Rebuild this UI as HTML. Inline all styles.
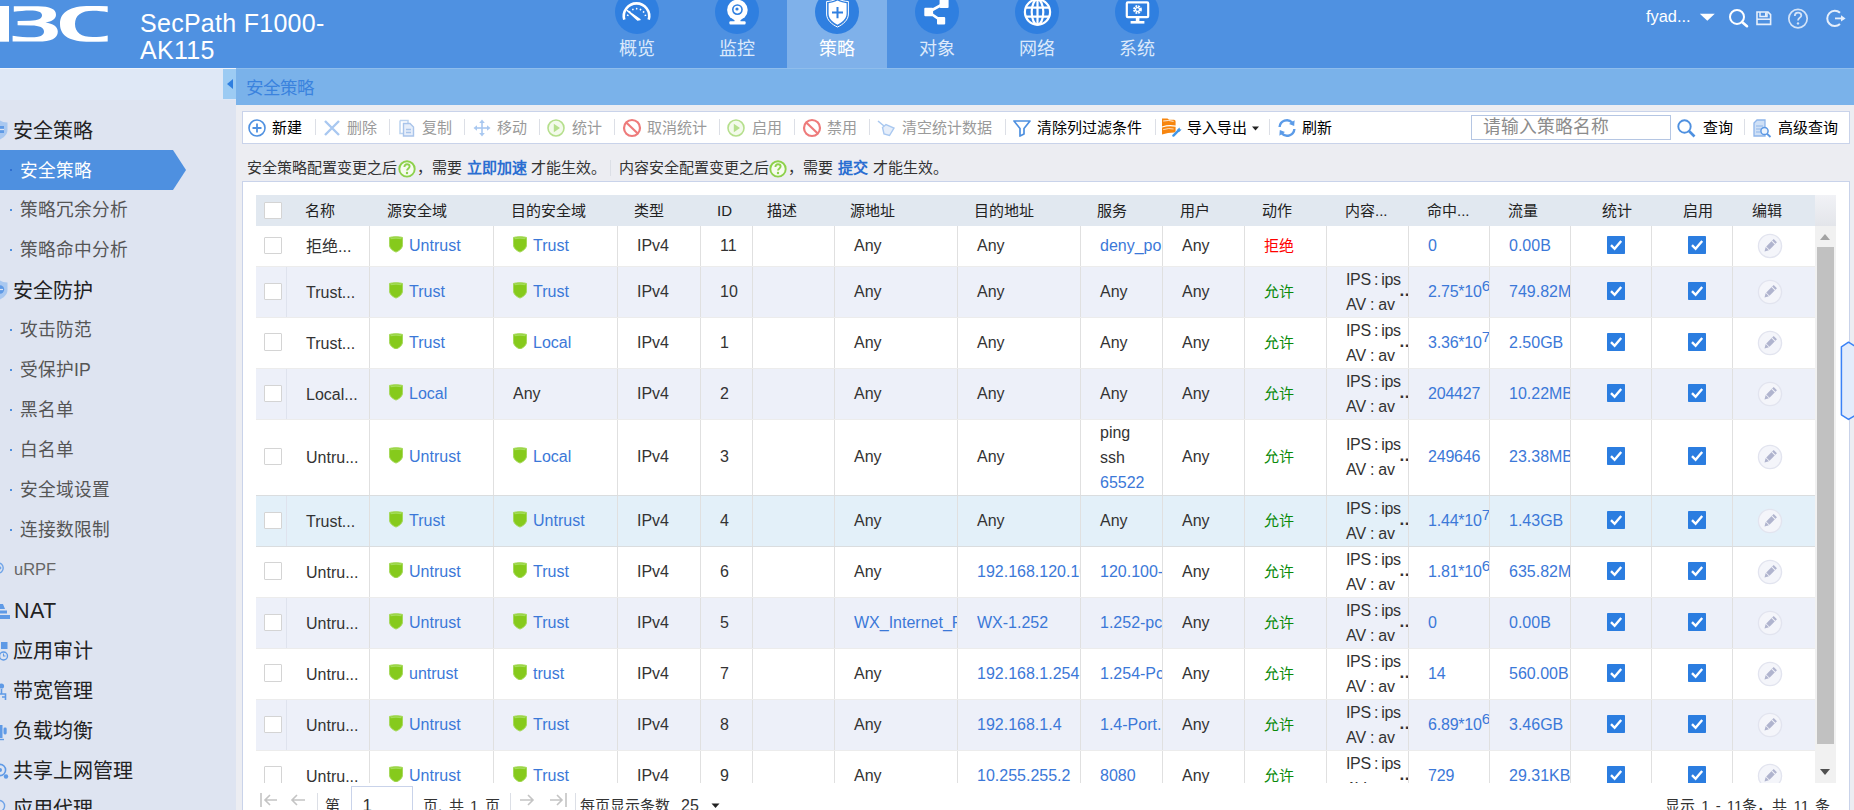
<!DOCTYPE html>
<html lang="zh-CN">
<head>
<meta charset="utf-8">
<title>安全策略</title>
<style>
*{box-sizing:border-box;margin:0;padding:0}
html,body{width:1854px;height:810px;overflow:hidden;background:#ecedf2}
body{position:relative;font-family:"Liberation Sans",sans-serif;font-size:16px;color:#333}
.abs{position:absolute}
/* header */
#hdr{position:absolute;left:0;top:0;width:1854px;height:68px;background:#4f91e1}
#logo{position:absolute;left:0;top:0}
#title{position:absolute;left:140px;top:9.8px;font-size:25px;line-height:27.2px;letter-spacing:.28px;color:#fff;width:240px}
.nav{position:absolute;top:0;width:100px;height:68px;text-align:center}
.nav.sel{background:#7fb1ea}
.nav .ic{position:absolute;left:28px;top:-10px;width:44px;height:44px;border-radius:22px;background:#2f7fe0}
.nav .ic svg{position:absolute;left:0;top:0;width:44px;height:44px}
.nav .lb{position:absolute;left:0;top:36.5px;width:100px;font-size:18px;line-height:24px;color:#dce9fb}
.nav.sel .lb{color:#fff}
#user{position:absolute;left:1646px;top:6px;font-size:16.4px;line-height:20px;color:#fff}
/* sub bar */
#sbtop{position:absolute;left:0;top:68px;width:236px;height:32px;background:#dfe8f6;border-top:1px solid #eef3fb}
#crumb{position:absolute;left:236px;top:68px;width:1618px;height:37px;background:#7ab2ea;border-top:1px solid #8fbdec}
#crumb span{position:absolute;left:10px;top:7.5px;font-size:17.5px;line-height:22px;color:#3a83de}
#collapse{position:absolute;left:223px;top:69px;width:13px;height:30px;background:#9ccbf3}
#collapse i{position:absolute;left:4px;top:10px;width:0;height:0;border-top:5px solid transparent;border-bottom:5px solid transparent;border-right:6px solid #2f7fe0}
/* sidebar */
#side{position:absolute;left:0;top:100px;width:236px;height:710px;background:#dee4f1}
.sg{position:absolute;left:13px;margin-top:.5px;font-size:20px;line-height:26px;color:#222;white-space:nowrap}
.si{position:absolute;left:20px;margin-top:1px;font-size:17.7px;line-height:24px;color:#555;white-space:nowrap}
.sd{position:absolute;left:10px;width:2px;height:2px;background:#4e90e0}
.sico{position:absolute;left:0}
#selitem{position:absolute;left:0;top:150px;width:186px;height:40px}
/* toolbar */
#tb{position:absolute;left:242px;top:111px;width:1608px;height:33px;background:#fff;border:1px solid #c9d3ea}
.tbi{position:absolute;top:118px;font-size:15px;line-height:20px;white-space:nowrap;color:#000}
.tbi.dis{color:#9a9a9a}
.tbs{position:absolute;top:119px;width:1px;height:16px;background:#dcdfe6}
.tbic{position:absolute;top:118px;width:20px;height:20px}
#q{position:absolute;left:1471px;top:115px;width:200px;height:25px;border:1px solid #b5c6e3;background:#fff}
#q span{position:absolute;left:10.5px;top:0px;font-size:17.8px;line-height:23px;color:#8c8c8c;white-space:nowrap}
/* info line */
.inf{position:absolute;top:158px;font-size:15px;line-height:20px;color:#333;white-space:nowrap}
.ib{font-weight:bold;color:#2a6ed1}
.hq{position:absolute;top:160px;width:17px;height:17px;border-radius:9px;border:1.6px solid #7cc43a;color:#7cc43a;font-size:12px;line-height:14px;text-align:center;font-weight:bold}
/* panel */
#panel{position:absolute;left:242px;top:181px;width:1608px;height:640px;background:#fff;border:1px solid #c9d3ea}
#th{position:absolute;left:256px;top:195px;width:1559px;height:31px;background:#e1e8f0}
#thx{position:absolute;left:1815px;top:195px;width:21px;height:31px;background:linear-gradient(#f1f2f6,#e3e5ea)}
.h{position:absolute;top:6px;font-size:15px;line-height:20px;color:#222;white-space:nowrap}
#tbody{position:absolute;left:256px;top:226px;width:1559px;height:557px;overflow:hidden}
.row{position:absolute;left:0;width:1559px}
.rw{background:#fff}
.rs{background:#edf0f9;border-top:1px solid #ececec;border-bottom:1px solid #ececec;z-index:1}
.rh{background:#e3f0f9;border-top:1px solid #dadddf;border-bottom:1px solid #dadddf;z-index:2}
.c{position:absolute;top:0;height:100%;border-left:1px solid #e0e0e0;padding-left:19px;overflow:hidden;white-space:nowrap;display:flex;align-items:center}
.c.c0{border-left:none;padding-left:8px}
.c.c1{border-left:1px solid #dfe3ee}
.c.c1 .t{top:1.3px}
.rw .c.c1{border-left-color:transparent}
.t{font-size:16px;line-height:20px;color:#333;position:relative;top:.3px}
.lk{color:#3b78d8}
.z{margin-left:6px}
.zi{width:14px;height:16.5px;flex:none;margin-top:-3px}
.ck{width:18px;height:18px;flex:none;margin-top:-2px}
.ed{width:26px;height:26px;flex:none}
.cc{padding-left:36px}
.ce{padding-left:24px}
.cb{display:block;width:17.5px;height:17.5px;border:1.5px solid #d4d4d4;background:#fff;border-radius:1px;margin-top:-1px}
.deny{color:#f00;font-size:15px}
.permit{color:#0a8a0a;font-size:15px}
.ml{display:block}
.ml .l{display:block;font-size:16px;line-height:25px;color:#333}
.ml .l.lk{color:#3b78d8}
.ml .l1{letter-spacing:-.35px;word-spacing:-.9px}
.ml .l2{word-spacing:-.65px}
.dd{font-weight:bold;position:absolute;right:-2px;top:50%;margin-top:-9px;font-size:17px;line-height:16px;color:#333;letter-spacing:.5px}
.hx{letter-spacing:-.2px}
sup{font-size:15.5px;vertical-align:6.2px;line-height:0}
/* scrollbar */
#sb{position:absolute;left:1815px;top:226px;width:21px;height:557px;background:#f1f1f1}
#sb .th{position:absolute;left:2px;top:21px;width:17px;height:497px;background:#c1c1c1}
.arr{position:absolute;left:5px;width:0;height:0;border-left:5.5px solid transparent;border-right:5.5px solid transparent}
/* pager */
#pg{position:absolute;left:243px;top:783px;width:1606px;height:27px;background:#fff}
.pt{position:absolute;font-size:15px;line-height:20px;color:#333;white-space:nowrap;top:12.8px}
</style>
</head>
<body>
<div id="hdr">
  <svg id="logo" width="112" height="46" viewBox="0 0 112 46"><g fill="#fff"><rect x="-2" y="6" width="11" height="35.7"/><path d="M13.8 6.2 L38 6.2 C50 6.2 56 9 56 14.8 C56 19 52 21.5 45.5 22.6 C53 23.8 57.8 26.5 57.8 31.8 C57.8 38.5 51 41.6 38 41.6 L12.6 41.6 L12.6 35.8 C20 36.8 26 37.3 31 37.3 C40 37.3 44 35.5 44 31.5 C44 27.5 40 25.4 31 25.4 L17.6 25.3 L17.6 21 L30 20.8 C38 20.6 42 18.8 42 15.3 C42 11.8 38 10.4 30 10.4 C25 10.4 19 11 13.8 11.8 Z"/><path d="M107.7 6.2 L107.7 12.3 C103 11.3 98 10.8 93 10.8 C81 10.8 75 15.5 75 24 C75 32.5 81 37 93 37 C98 37 103 36.5 107.7 35.5 L107.7 41.5 C102 41.7 96 41.8 90 41.8 C70 41.8 60 36 60 24 C60 12 70 6.1 90 6.1 C96 6.1 102 6.1 107.7 6.2 Z"/></g></svg>
  <div id="title">SecPath F1000-AK115</div>
  <div class="nav" style="left:587px"><div class="ic"><svg viewBox="0 0 44 44"><path d="M9.3 29.6 A12.7 12.7 0 1 1 33.7 29.6" fill="none" stroke="#fff" stroke-width="2.6"/><path d="M25 29.6 L22.6 30 L12.2 20.6 Z" fill="#fff" stroke="#fff" stroke-width="1.4" stroke-linejoin="round"/><path d="M12.6 26 A9.2 9.2 0 0 1 30.6 26" fill="none" stroke="#fff" stroke-width="1.7" stroke-dasharray="1.5 2.4"/></svg></div><div class="lb">概览</div></div>
  <div class="nav" style="left:687px"><div class="ic"><svg viewBox="0 0 44 44"><circle cx="22.4" cy="20" r="10.3" fill="#fff"/><circle cx="22.4" cy="19.6" r="5.4" fill="#2f7fe0"/><circle cx="22.4" cy="19.6" r="3.8" fill="#fff"/><circle cx="22" cy="19" r="1.6" fill="#2f7fe0"/><rect x="19.5" y="29" width="6" height="3" fill="#fff"/><rect x="14.4" y="31.2" width="16.2" height="3.4" rx="1" fill="#fff"/></svg></div><div class="lb">监控</div></div>
  <div class="nav sel" style="left:787px"><div class="ic"><svg viewBox="0 0 44 44"><path d="M11.6 11.5 C15 11.5 19 10.5 22.5 8.5 C26 10.5 30 11.5 33.4 11.5 L33.4 24 C33.4 30 28 34.5 22.5 37 C17 34.5 11.6 30 11.6 24 Z" fill="none" stroke="#fff" stroke-width="1"/><path d="M13.6 13.2 C16.5 13 19.5 12.2 22.5 10.6 C25.5 12.2 28.5 13 31.6 13.2 L31.6 23.8 C31.6 28.8 27 32.6 22.5 34.8 C18 32.6 13.6 28.8 13.6 23.8 Z" fill="#fff"/><path d="M17 22.6 H28 M22.5 17 V28.2" stroke="#2f7fe0" stroke-width="2"/></svg></div><div class="lb">策略</div></div>
  <div class="nav" style="left:887px"><div class="ic"><svg viewBox="0 0 44 44"><path d="M29 13.5 L13.6 22 L26 30.6" fill="none" stroke="#fff" stroke-width="2.6"/><rect x="9.3" y="17.8" width="8.8" height="8.4" rx="1" fill="#fff"/><rect x="24.6" y="9" width="9" height="9" rx="1" fill="#fff"/><rect x="22" y="27" width="8.2" height="7.4" rx="1" fill="#fff"/></svg></div><div class="lb">对象</div></div>
  <div class="nav" style="left:987px"><div class="ic"><svg viewBox="0 0 44 44"><g fill="none" stroke="#fff" stroke-width="2.2"><circle cx="22.5" cy="22.1" r="12.6"/><ellipse cx="22.5" cy="22.1" rx="5.8" ry="12.6"/><path d="M22.5 9.5 V34.7 M10.5 17.6 H34.5 M10.5 26.6 H34.5"/></g></svg></div><div class="lb">网络</div></div>
  <div class="nav" style="left:1087px"><div class="ic"><svg viewBox="0 0 44 44"><rect x="11.8" y="12.4" width="21.4" height="14.8" rx="1" fill="none" stroke="#fff" stroke-width="2.2"/><rect x="20.8" y="28" width="3.6" height="3.2" fill="#fff"/><rect x="15.6" y="31" width="13.8" height="2.6" fill="#fff"/><circle cx="22.5" cy="19.5" r="3.2" fill="none" stroke="#fff" stroke-width="2.4" stroke-dasharray="1.7 0.85"/><circle cx="22.5" cy="19.5" r="2.6" fill="#fff"/><circle cx="22.5" cy="19.5" r="1.3" fill="#2f7fe0"/></svg></div><div class="lb">系统</div></div>
  <div id="user">fyad...</div>
<svg class="abs" style="left:1696px;top:6px" width="158" height="26" viewBox="1696 6 158 26">
<path d="M1699.8 13.8 H1714.8 L1707.3 20.8 Z" fill="#fff"/>
<circle cx="1737" cy="16.9" r="7" fill="none" stroke="#fff" stroke-width="2"/><path d="M1742 22 L1747 26.2" stroke="#fff" stroke-width="2.6" stroke-linecap="round"/>
<path d="M1757 12 H1768 L1770.6 14.6 V24.4 H1757 Z" fill="none" stroke="#e6effb" stroke-width="1.6"/><path d="M1760 12 V16.5 H1767 V12" fill="none" stroke="#e6effb" stroke-width="1.5"/><rect x="1765" y="12.5" width="1.6" height="3.5" fill="#e6effb"/><path d="M1757 19.2 H1770.6" stroke="#e6effb" stroke-width="1.5"/>
<circle cx="1798" cy="18.6" r="9.2" fill="none" stroke="#d3e3f8" stroke-width="1.7"/><path d="M1794.8 16 C1794.8 13.5 1796.2 12.6 1798 12.6 C1800 12.6 1801.3 13.8 1801.3 15.4 C1801.3 17.6 1798 17.8 1798 20.6" fill="none" stroke="#d3e3f8" stroke-width="1.8"/><circle cx="1798" cy="23.4" r="1.2" fill="#d3e3f8"/>
<path d="M1840 12.8 A7.6 7.6 0 1 0 1840 24" fill="none" stroke="#e6effb" stroke-width="2"/><path d="M1835 18.4 H1842" stroke="#e6effb" stroke-width="1.8"/><path d="M1841 15.2 L1845.6 18.4 L1841 21.6 Z" fill="#e6effb"/>
</svg>
</div>
<div id="sbtop"></div>
<div id="crumb"><span>安全策略</span></div>
<div id="collapse"><i></i></div>
<div id="side"></div>
<svg id="selitem" viewBox="0 0 186 40"><path d="M0 0 L173 0 L186 20 L173 40 L0 40 Z" fill="#4e90e0"/></svg>
<div id="sidetxt"><div class="sd" style="top:169px;background:#2f6fd0"></div><div class="sd" style="top:209px"></div><div class="sd" style="top:249px"></div><div class="sd" style="top:329px"></div><div class="sd" style="top:369px"></div><div class="sd" style="top:409px"></div><div class="sd" style="top:449px"></div><div class="sd" style="top:489px"></div><div class="sd" style="top:529px"></div>
<svg class="sico" style="top:120px" width="9" height="20" viewBox="0 0 9 20"><path d="M-8 2.5 C-4 2.5 -2 1.5 0 0.5 C2 1.5 4 2.5 7.5 2.5 V10 C7.5 15 3 18 0 19.5 C-3 18 -8 15 -8 10 Z" fill="#a9c8f0"/><path d="M-2 6 H4 V13 H-2 Z" fill="#5f9ae6"/><path d="M-2 9.5 H4" stroke="#dee4f1" stroke-width="1.3"/></svg>
<svg class="sico" style="top:280px" width="9" height="20" viewBox="0 0 9 20"><path d="M-8 2.5 C-4 2.5 -2 1.5 0 0.5 C2 1.5 4 2.5 7.5 2.5 V10 C7.5 15 3 18 0 19.5 C-3 18 -8 15 -8 10 Z" fill="#a9c8f0"/><circle cx="0" cy="9.5" r="4.2" fill="#5f9ae6"/><path d="M-3 9.5 H3" stroke="#dee4f1" stroke-width="1.2"/></svg>
<svg class="sico" style="top:558px" width="6" height="20" viewBox="0 0 6 20"><circle cx="-2" cy="10" r="5.2" fill="none" stroke="#6fa4e8" stroke-width="1.4"/><circle cx="0" cy="10" r="1.4" fill="#6fa4e8"/></svg>
<svg class="sico" style="top:601px" width="11" height="20" viewBox="0 0 11 20"><path d="M0 3 H3 L5 8 H0 Z" fill="#5f9ae6"/><rect x="0" y="9.5" width="7" height="3" fill="#5f9ae6"/><rect x="0" y="14" width="10" height="4" fill="#5f9ae6"/></svg>
<svg class="sico" style="top:640px" width="9" height="22" viewBox="0 0 9 22"><rect x="1" y="2" width="6.5" height="7" fill="#5f9ae6"/><circle cx="3.5" cy="16" r="4" fill="none" stroke="#5f9ae6" stroke-width="1.4"/><path d="M3.5 13.5 V16 H5.5" fill="none" stroke="#5f9ae6" stroke-width="1.1"/></svg>
<svg class="sico" style="top:681px" width="8" height="22" viewBox="0 0 8 22"><circle cx="1.5" cy="5" r="2.6" fill="#5f9ae6"/><path d="M1.5 8 V13 M-2 13 H5.5 V19 M5.5 16 H2" fill="none" stroke="#5f9ae6" stroke-width="1.6"/></svg>
<svg class="sico" style="top:721px" width="8" height="22" viewBox="0 0 8 22"><path d="M0 4 H2.5 V17 H0 Z" fill="#5f9ae6"/><rect x="3.5" y="6.5" width="3.2" height="7" rx="1.4" fill="#5f9ae6"/><path d="M0 18.5 H4" stroke="#5f9ae6" stroke-width="1.4"/></svg>
<svg class="sico" style="top:760px" width="9" height="22" viewBox="0 0 9 22"><circle cx="0" cy="10" r="5.6" fill="none" stroke="#5f9ae6" stroke-width="1.6"/><circle cx="0" cy="10" r="2" fill="#5f9ae6"/><circle cx="6" cy="16.5" r="2.2" fill="#5f9ae6"/></svg>
<svg class="sico" style="top:797px" width="7" height="13" viewBox="0 0 7 13"><circle cx="-1" cy="9" r="5.6" fill="none" stroke="#6fa4e8" stroke-width="1.4"/></svg>

  <div class="sg" style="top:117px">安全策略</div>
  <div class="si" style="top:158px;color:#fff">安全策略</div>
  <div class="si" style="top:197px">策略冗余分析</div>
  <div class="si" style="top:237px">策略命中分析</div>
  <div class="sg" style="top:277px">安全防护</div>
  <div class="si" style="top:317px">攻击防范</div>
  <div class="si" style="top:357px">受保护IP</div>
  <div class="si" style="top:397px">黑名单</div>
  <div class="si" style="top:437px">白名单</div>
  <div class="si" style="top:477px">安全域设置</div>
  <div class="si" style="top:517px">连接数限制</div>
  <div class="si" style="top:556px;left:14px;font-size:16.5px;color:#666">uRPF</div>
  <div class="sg" style="top:597.5px;left:14px;font-size:21.5px;letter-spacing:.4px">NAT</div>
  <div class="sg" style="top:637.5px">应用审计</div>
  <div class="sg" style="top:677.5px">带宽管理</div>
  <div class="sg" style="top:717.5px">负载均衡</div>
  <div class="sg" style="top:757.5px">共享上网管理</div>
  <div class="sg" style="top:795px">应用代理</div>
</div>
<div id="tb"></div>
<div id="tbl"><div class="tbi" style="left:272px">新建</div><div class="tbs" style="left:315px"></div><div class="tbi dis" style="left:347px">删除</div><div class="tbs" style="left:389px"></div><div class="tbi dis" style="left:422px">复制</div><div class="tbs" style="left:464px"></div><div class="tbi dis" style="left:497px">移动</div><div class="tbs" style="left:539px"></div><div class="tbi dis" style="left:572px">统计</div><div class="tbs" style="left:614px"></div><div class="tbi dis" style="left:647px">取消统计</div><div class="tbs" style="left:719px"></div><div class="tbi dis" style="left:752px">启用</div><div class="tbs" style="left:794px"></div><div class="tbi dis" style="left:827px">禁用</div><div class="tbs" style="left:869px"></div><div class="tbi dis" style="left:902px">清空统计数据</div><div class="tbs" style="left:1005px"></div><div class="tbi" style="left:1037px">清除列过滤条件</div><div class="tbs" style="left:1155px"></div><div class="tbi" style="left:1187px">导入导出</div><div class="tbs" style="left:1269px"></div><div class="tbi" style="left:1302px">刷新</div><div class="tbi" style="left:1703px">查询</div><div class="tbs" style="left:1744px"></div><div class="tbi" style="left:1778px">高级查询</div>
<svg class="tbic" style="left:247px" viewBox="0 0 20 20"><circle cx="10" cy="10" r="8" fill="none" stroke="#4e90e0" stroke-width="1.6"/><path d="M5.5 10 H14.5 M10 5.5 V14.5" stroke="#4e90e0" stroke-width="1.8"/></svg>
<svg class="tbic" style="left:322px" viewBox="0 0 20 20"><path d="M3 3 L17 17 M17 3 L3 17" stroke="#a9c8f0" stroke-width="2.4"/></svg>
<svg class="tbic" style="left:397px" viewBox="0 0 20 20"><path d="M3 2.5 H11 L11 5 M3 2.5 V15.5 H6" fill="none" stroke="#bcd3f0" stroke-width="1.5"/><path d="M6.5 5.5 H13 L16.5 9 V18 H6.5 Z" fill="#e6eefa" stroke="#a9c4ea" stroke-width="1.4"/><path d="M9 11.5 H14 M9 14.5 H14" stroke="#a9c4ea" stroke-width="1.3"/></svg>
<svg class="tbic" style="left:472px" viewBox="0 0 20 20"><g fill="#a9c8f0"><path d="M10 1.5 L12.8 5 H7.2 Z"/><path d="M10 18.5 L12.8 15 H7.2 Z"/><path d="M1.5 10 L5 7.2 V12.8 Z"/><path d="M18.5 10 L15 7.2 V12.8 Z"/><rect x="9.2" y="4.5" width="1.6" height="11"/><rect x="4.5" y="9.2" width="11" height="1.6"/></g></svg>
<svg class="tbic" style="left:546px" viewBox="0 0 20 20"><circle cx="10" cy="10" r="8" fill="#f3faeb" stroke="#b5df8c" stroke-width="1.6"/><path d="M7.8 5.8 L14 10 L7.8 14.2 Z" fill="#b5df8c"/></svg>
<svg class="tbic" style="left:622px" viewBox="0 0 20 20"><circle cx="10" cy="10" r="8" fill="none" stroke="#ee7b7b" stroke-width="2.2"/><path d="M4.5 4.8 L15.5 15.2" stroke="#ee7b7b" stroke-width="2.2"/></svg>
<svg class="tbic" style="left:726px" viewBox="0 0 20 20"><circle cx="10" cy="10" r="8" fill="#f3faeb" stroke="#b5df8c" stroke-width="1.6"/><path d="M7.8 5.8 L14 10 L7.8 14.2 Z" fill="#b5df8c"/></svg>
<svg class="tbic" style="left:802px" viewBox="0 0 20 20"><circle cx="10" cy="10" r="8" fill="none" stroke="#ee7b7b" stroke-width="2.2"/><path d="M4.5 4.8 L15.5 15.2" stroke="#ee7b7b" stroke-width="2.2"/></svg>
<svg class="tbic" style="left:876px" viewBox="0 0 20 20"><path d="M2 3 L8 8" stroke="#a9c8f0" stroke-width="1.6"/><path d="M6.5 9.5 L10 6.5 L18 10 L13.5 17.5 L8 16 Z" fill="#e6eefa" stroke="#a9c8f0" stroke-width="1.4"/></svg>
<svg class="tbic" style="left:1012px" viewBox="0 0 20 20"><path d="M2 3 H18 L12 10.5 V16 L8 18 V10.5 Z" fill="none" stroke="#4e90e0" stroke-width="1.7" stroke-linejoin="round"/></svg>
<svg class="tbic" style="left:1161px;width:22px" viewBox="0 0 22 20"><path d="M1 0.6 H6.5 L8 1.8 H13 Q14.6 1.8 14.6 3.4 V7.6 Q8 6 1 8.4 Z" fill="#f7860f"/><path d="M2.2 3 Q8 1.8 12.6 3.4" stroke="#fff" stroke-width="1" fill="none" opacity=".85"/><path d="M1 9.6 Q8 7.2 14.6 8.8 V13 Q14.6 14.4 13 14.4 Q7 14.4 1 16.4 Z" fill="#f7860f"/><path d="M2.2 11.6 Q8 9.8 12.6 11" stroke="#fff" stroke-width="1" fill="none" opacity=".7"/><path d="M12.4 17.6 L17.6 12.4" stroke="#3f97ea" stroke-width="2.4" stroke-linecap="round"/><path d="M16.2 11.6 L18.6 9.6 L18.9 11.3 L20.6 11.6 L18.6 13.8 Z" fill="#3f97ea"/></svg>
<svg class="tbic" style="left:1251px;width:9px" viewBox="0 0 9 20"><path d="M1 8.5 H8 L4.5 12.5 Z" fill="#222"/></svg>
<svg class="tbic" style="left:1277px;top:117.5px" viewBox="0 0 20 20"><path d="M2.6 9 A7.3 7.3 0 0 1 15.2 4.6" fill="none" stroke="#5b9be8" stroke-width="2.4"/><path d="M17.4 11 A7.3 7.3 0 0 1 4.8 15.4" fill="none" stroke="#5b9be8" stroke-width="2.4"/><path d="M17.6 2.2 L17.2 8 L12 6 Z" fill="#5b9be8"/><path d="M2.4 17.8 L2.8 12 L8 14 Z" fill="#5b9be8"/></svg>
<svg class="tbic" style="left:1676px" viewBox="0 0 20 20"><circle cx="8.5" cy="8.5" r="6.2" fill="none" stroke="#4e90e0" stroke-width="1.9"/><path d="M13 13 L18.5 18.5" stroke="#4e90e0" stroke-width="2.6"/></svg>
<svg class="tbic" style="left:1752px" viewBox="0 0 20 20"><path d="M2 5 L5 2 H13 V18 H2 Z" fill="#cfe0f6" stroke="#8fb5ea" stroke-width="1.3"/><path d="M4 8 H11 M4 11 H11 M4 14 H8" stroke="#8fb5ea" stroke-width="1.2"/><circle cx="12.5" cy="13" r="3.6" fill="#eef4fc" stroke="#5c98e4" stroke-width="1.5"/><path d="M15 15.8 L18.5 19" stroke="#5c98e4" stroke-width="1.9"/></svg>
<div id="q"><span>请输入策略名称</span></div></div>
<div class="inf" style="left:247px">安全策略配置变更之后</div><svg class="abs" style="left:398px;top:160px" width="18" height="18" viewBox="0 0 18 18"><circle cx="9" cy="8.9" r="7.7" fill="#f6fbef" stroke="#8dd14b" stroke-width="1.9"/><path d="M6.4 7 C6.4 5 7.6 4.2 9 4.2 C10.6 4.2 11.6 5.2 11.6 6.5 C11.6 8.4 9 8.4 9 10.6" fill="none" stroke="#8dd14b" stroke-width="1.9"/><circle cx="9" cy="13" r="1.2" fill="#8dd14b"/></svg><div class="inf" style="left:417px">，需要</div><div class="inf ib" style="left:467px">立即加速</div><div class="inf" style="left:531px">才能生效。</div><div class="tbs" style="left:610px;top:160px"></div>
<div class="inf" style="left:619px">内容安全配置变更之后</div><svg class="abs" style="left:769px;top:160px" width="18" height="18" viewBox="0 0 18 18"><circle cx="9" cy="8.9" r="7.7" fill="#f6fbef" stroke="#8dd14b" stroke-width="1.9"/><path d="M6.4 7 C6.4 5 7.6 4.2 9 4.2 C10.6 4.2 11.6 5.2 11.6 6.5 C11.6 8.4 9 8.4 9 10.6" fill="none" stroke="#8dd14b" stroke-width="1.9"/><circle cx="9" cy="13" r="1.2" fill="#8dd14b"/></svg><div class="inf" style="left:788px">，需要</div><div class="inf ib" style="left:838px">提交</div><div class="inf" style="left:873px">才能生效。</div>
<div id="panel"></div>
<div id="th"><span class="cb" style="position:absolute;left:8px;top:7.5px"></span><div class="h" style="left:49px">名称</div><div class="h" style="left:131px">源安全域</div><div class="h" style="left:255px">目的安全域</div><div class="h" style="left:378px">类型</div><div class="h" style="left:461px">ID</div><div class="h" style="left:511px">描述</div><div class="h" style="left:594px">源地址</div><div class="h" style="left:718px">目的地址</div><div class="h" style="left:841px">服务</div><div class="h" style="left:924px">用户</div><div class="h" style="left:1006px">动作</div><div class="h" style="left:1089px">内容...</div><div class="h" style="left:1171px">命中...</div><div class="h" style="left:1252px">流量</div><div class="h" style="left:1346px">统计</div><div class="h" style="left:1427px">启用</div><div class="h" style="left:1496px">编辑</div></div>
<div id="thx"></div>
<div id="tbody">
<div class="row rw" style="top:0px;height:40px">
<div class="c c0" style="left:0px;width:30px"><span class="cb"></span></div>
<div class="c c1" style="left:30px;width:83px"><span class="t">拒绝...</span></div>
<div class="c " style="left:113px;width:124px"><svg class="zi" viewBox="0 0 14 16"><path d="M0.5 1.2 C4 0.2 10 0.2 13.5 1.2 L13.5 8.5 C13.5 12 10.5 14.5 7 15.8 C3.5 14.5 0.5 12 0.5 8.5 Z" fill="#86ca1c" stroke="#a5d95a" stroke-width="1"/><path d="M1.5 1.6 C4.5 0.9 9.5 0.9 12.5 1.6 L12.5 3 C9.5 2.3 4.5 2.3 1.5 3 Z" fill="#a4dc5a"/></svg><span class="t lk z">Untrust</span></div>
<div class="c " style="left:237px;width:124px"><svg class="zi" viewBox="0 0 14 16"><path d="M0.5 1.2 C4 0.2 10 0.2 13.5 1.2 L13.5 8.5 C13.5 12 10.5 14.5 7 15.8 C3.5 14.5 0.5 12 0.5 8.5 Z" fill="#86ca1c" stroke="#a5d95a" stroke-width="1"/><path d="M1.5 1.6 C4.5 0.9 9.5 0.9 12.5 1.6 L12.5 3 C9.5 2.3 4.5 2.3 1.5 3 Z" fill="#a4dc5a"/></svg><span class="t lk z">Trust</span></div>
<div class="c " style="left:361px;width:83px"><span class="t">IPv4</span></div>
<div class="c " style="left:444px;width:52px"><span class="t">11</span></div>
<div class="c " style="left:496px;width:82px"></div>
<div class="c " style="left:578px;width:123px"><span class="t">Any</span></div>
<div class="c " style="left:701px;width:123px"><span class="t">Any</span></div>
<div class="c " style="left:824px;width:82px"><span class="t lk">deny_po</span></div>
<div class="c " style="left:906px;width:82px"><span class="t">Any</span></div>
<div class="c " style="left:988px;width:82px"><span class="t deny">拒绝</span></div>
<div class="c " style="left:1070px;width:82px"></div>
<div class="c " style="left:1152px;width:81px"><span class="t lk hx">0</span></div>
<div class="c " style="left:1233px;width:81px"><span class="t lk">0.00B</span></div>
<div class="c cc" style="left:1314px;width:81px"><svg class="ck" viewBox="0 0 18 18"><rect x="0" y="0" width="18" height="18" rx="0.8" fill="#2b7de0"/><path d="M4 9.2 L7.6 12.8 L14.2 5" fill="none" stroke="#fff" stroke-width="2.4"/></svg></div>
<div class="c cc" style="left:1395px;width:81px"><svg class="ck" viewBox="0 0 18 18"><rect x="0" y="0" width="18" height="18" rx="0.8" fill="#2b7de0"/><path d="M4 9.2 L7.6 12.8 L14.2 5" fill="none" stroke="#fff" stroke-width="2.4"/></svg></div>
<div class="c ce" style="left:1476px;width:82px"><svg class="ed" viewBox="0 0 26 26"><circle cx="13" cy="13" r="11.6" fill="#f4f5fa" stroke="#e2e4ef" stroke-width="1.3"/><g transform="rotate(45 13 13)"><rect x="10.7" y="5.5" width="4.6" height="10.5" fill="#b0b4ce"/><path d="M10.7 16.8 L15.3 16.8 L13 20.8 Z" fill="#b0b4ce"/><rect x="10.7" y="7.6" width="4.6" height="1" fill="#f1f2f8"/></g></svg></div>
</div>
<div class="row rs" style="top:40px;height:52px">
<div class="c c0" style="left:0px;width:30px"><span class="cb"></span></div>
<div class="c c1" style="left:30px;width:83px"><span class="t">Trust...</span></div>
<div class="c " style="left:113px;width:124px"><svg class="zi" viewBox="0 0 14 16"><path d="M0.5 1.2 C4 0.2 10 0.2 13.5 1.2 L13.5 8.5 C13.5 12 10.5 14.5 7 15.8 C3.5 14.5 0.5 12 0.5 8.5 Z" fill="#86ca1c" stroke="#a5d95a" stroke-width="1"/><path d="M1.5 1.6 C4.5 0.9 9.5 0.9 12.5 1.6 L12.5 3 C9.5 2.3 4.5 2.3 1.5 3 Z" fill="#a4dc5a"/></svg><span class="t lk z">Trust</span></div>
<div class="c " style="left:237px;width:124px"><svg class="zi" viewBox="0 0 14 16"><path d="M0.5 1.2 C4 0.2 10 0.2 13.5 1.2 L13.5 8.5 C13.5 12 10.5 14.5 7 15.8 C3.5 14.5 0.5 12 0.5 8.5 Z" fill="#86ca1c" stroke="#a5d95a" stroke-width="1"/><path d="M1.5 1.6 C4.5 0.9 9.5 0.9 12.5 1.6 L12.5 3 C9.5 2.3 4.5 2.3 1.5 3 Z" fill="#a4dc5a"/></svg><span class="t lk z">Trust</span></div>
<div class="c " style="left:361px;width:83px"><span class="t">IPv4</span></div>
<div class="c " style="left:444px;width:52px"><span class="t">10</span></div>
<div class="c " style="left:496px;width:82px"></div>
<div class="c " style="left:578px;width:123px"><span class="t">Any</span></div>
<div class="c " style="left:701px;width:123px"><span class="t">Any</span></div>
<div class="c " style="left:824px;width:82px"><span class="t">Any</span></div>
<div class="c " style="left:906px;width:82px"><span class="t">Any</span></div>
<div class="c " style="left:988px;width:82px"><span class="t permit">允许</span></div>
<div class="c " style="left:1070px;width:82px"><span class="ml"><span class="l l1">IPS : ips</span><span class="l l2">AV : av</span></span><span class="dd">..</span></div>
<div class="c " style="left:1152px;width:81px"><span class="t lk hx">2.75*10<sup>6</sup></span></div>
<div class="c " style="left:1233px;width:81px"><span class="t lk">749.82M</span></div>
<div class="c cc" style="left:1314px;width:81px"><svg class="ck" viewBox="0 0 18 18"><rect x="0" y="0" width="18" height="18" rx="0.8" fill="#2b7de0"/><path d="M4 9.2 L7.6 12.8 L14.2 5" fill="none" stroke="#fff" stroke-width="2.4"/></svg></div>
<div class="c cc" style="left:1395px;width:81px"><svg class="ck" viewBox="0 0 18 18"><rect x="0" y="0" width="18" height="18" rx="0.8" fill="#2b7de0"/><path d="M4 9.2 L7.6 12.8 L14.2 5" fill="none" stroke="#fff" stroke-width="2.4"/></svg></div>
<div class="c ce" style="left:1476px;width:82px"><svg class="ed" viewBox="0 0 26 26"><circle cx="13" cy="13" r="11.6" fill="#f4f5fa" stroke="#e2e4ef" stroke-width="1.3"/><g transform="rotate(45 13 13)"><rect x="10.7" y="5.5" width="4.6" height="10.5" fill="#b0b4ce"/><path d="M10.7 16.8 L15.3 16.8 L13 20.8 Z" fill="#b0b4ce"/><rect x="10.7" y="7.6" width="4.6" height="1" fill="#f1f2f8"/></g></svg></div>
</div>
<div class="row rw" style="top:91px;height:51px">
<div class="c c0" style="left:0px;width:30px"><span class="cb"></span></div>
<div class="c c1" style="left:30px;width:83px"><span class="t">Trust...</span></div>
<div class="c " style="left:113px;width:124px"><svg class="zi" viewBox="0 0 14 16"><path d="M0.5 1.2 C4 0.2 10 0.2 13.5 1.2 L13.5 8.5 C13.5 12 10.5 14.5 7 15.8 C3.5 14.5 0.5 12 0.5 8.5 Z" fill="#86ca1c" stroke="#a5d95a" stroke-width="1"/><path d="M1.5 1.6 C4.5 0.9 9.5 0.9 12.5 1.6 L12.5 3 C9.5 2.3 4.5 2.3 1.5 3 Z" fill="#a4dc5a"/></svg><span class="t lk z">Trust</span></div>
<div class="c " style="left:237px;width:124px"><svg class="zi" viewBox="0 0 14 16"><path d="M0.5 1.2 C4 0.2 10 0.2 13.5 1.2 L13.5 8.5 C13.5 12 10.5 14.5 7 15.8 C3.5 14.5 0.5 12 0.5 8.5 Z" fill="#86ca1c" stroke="#a5d95a" stroke-width="1"/><path d="M1.5 1.6 C4.5 0.9 9.5 0.9 12.5 1.6 L12.5 3 C9.5 2.3 4.5 2.3 1.5 3 Z" fill="#a4dc5a"/></svg><span class="t lk z">Local</span></div>
<div class="c " style="left:361px;width:83px"><span class="t">IPv4</span></div>
<div class="c " style="left:444px;width:52px"><span class="t">1</span></div>
<div class="c " style="left:496px;width:82px"></div>
<div class="c " style="left:578px;width:123px"><span class="t">Any</span></div>
<div class="c " style="left:701px;width:123px"><span class="t">Any</span></div>
<div class="c " style="left:824px;width:82px"><span class="t">Any</span></div>
<div class="c " style="left:906px;width:82px"><span class="t">Any</span></div>
<div class="c " style="left:988px;width:82px"><span class="t permit">允许</span></div>
<div class="c " style="left:1070px;width:82px"><span class="ml"><span class="l l1">IPS : ips</span><span class="l l2">AV : av</span></span><span class="dd">..</span></div>
<div class="c " style="left:1152px;width:81px"><span class="t lk hx">3.36*10<sup>7</sup></span></div>
<div class="c " style="left:1233px;width:81px"><span class="t lk">2.50GB</span></div>
<div class="c cc" style="left:1314px;width:81px"><svg class="ck" viewBox="0 0 18 18"><rect x="0" y="0" width="18" height="18" rx="0.8" fill="#2b7de0"/><path d="M4 9.2 L7.6 12.8 L14.2 5" fill="none" stroke="#fff" stroke-width="2.4"/></svg></div>
<div class="c cc" style="left:1395px;width:81px"><svg class="ck" viewBox="0 0 18 18"><rect x="0" y="0" width="18" height="18" rx="0.8" fill="#2b7de0"/><path d="M4 9.2 L7.6 12.8 L14.2 5" fill="none" stroke="#fff" stroke-width="2.4"/></svg></div>
<div class="c ce" style="left:1476px;width:82px"><svg class="ed" viewBox="0 0 26 26"><circle cx="13" cy="13" r="11.6" fill="#f4f5fa" stroke="#e2e4ef" stroke-width="1.3"/><g transform="rotate(45 13 13)"><rect x="10.7" y="5.5" width="4.6" height="10.5" fill="#b0b4ce"/><path d="M10.7 16.8 L15.3 16.8 L13 20.8 Z" fill="#b0b4ce"/><rect x="10.7" y="7.6" width="4.6" height="1" fill="#f1f2f8"/></g></svg></div>
</div>
<div class="row rs" style="top:142px;height:52px">
<div class="c c0" style="left:0px;width:30px"><span class="cb"></span></div>
<div class="c c1" style="left:30px;width:83px"><span class="t">Local...</span></div>
<div class="c " style="left:113px;width:124px"><svg class="zi" viewBox="0 0 14 16"><path d="M0.5 1.2 C4 0.2 10 0.2 13.5 1.2 L13.5 8.5 C13.5 12 10.5 14.5 7 15.8 C3.5 14.5 0.5 12 0.5 8.5 Z" fill="#86ca1c" stroke="#a5d95a" stroke-width="1"/><path d="M1.5 1.6 C4.5 0.9 9.5 0.9 12.5 1.6 L12.5 3 C9.5 2.3 4.5 2.3 1.5 3 Z" fill="#a4dc5a"/></svg><span class="t lk z">Local</span></div>
<div class="c " style="left:237px;width:124px"><span class="t">Any</span></div>
<div class="c " style="left:361px;width:83px"><span class="t">IPv4</span></div>
<div class="c " style="left:444px;width:52px"><span class="t">2</span></div>
<div class="c " style="left:496px;width:82px"></div>
<div class="c " style="left:578px;width:123px"><span class="t">Any</span></div>
<div class="c " style="left:701px;width:123px"><span class="t">Any</span></div>
<div class="c " style="left:824px;width:82px"><span class="t">Any</span></div>
<div class="c " style="left:906px;width:82px"><span class="t">Any</span></div>
<div class="c " style="left:988px;width:82px"><span class="t permit">允许</span></div>
<div class="c " style="left:1070px;width:82px"><span class="ml"><span class="l l1">IPS : ips</span><span class="l l2">AV : av</span></span><span class="dd">..</span></div>
<div class="c " style="left:1152px;width:81px"><span class="t lk hx">204427</span></div>
<div class="c " style="left:1233px;width:81px"><span class="t lk">10.22MB</span></div>
<div class="c cc" style="left:1314px;width:81px"><svg class="ck" viewBox="0 0 18 18"><rect x="0" y="0" width="18" height="18" rx="0.8" fill="#2b7de0"/><path d="M4 9.2 L7.6 12.8 L14.2 5" fill="none" stroke="#fff" stroke-width="2.4"/></svg></div>
<div class="c cc" style="left:1395px;width:81px"><svg class="ck" viewBox="0 0 18 18"><rect x="0" y="0" width="18" height="18" rx="0.8" fill="#2b7de0"/><path d="M4 9.2 L7.6 12.8 L14.2 5" fill="none" stroke="#fff" stroke-width="2.4"/></svg></div>
<div class="c ce" style="left:1476px;width:82px"><svg class="ed" viewBox="0 0 26 26"><circle cx="13" cy="13" r="11.6" fill="#f4f5fa" stroke="#e2e4ef" stroke-width="1.3"/><g transform="rotate(45 13 13)"><rect x="10.7" y="5.5" width="4.6" height="10.5" fill="#b0b4ce"/><path d="M10.7 16.8 L15.3 16.8 L13 20.8 Z" fill="#b0b4ce"/><rect x="10.7" y="7.6" width="4.6" height="1" fill="#f1f2f8"/></g></svg></div>
</div>
<div class="row rw" style="top:193px;height:76px">
<div class="c c0" style="left:0px;width:30px"><span class="cb"></span></div>
<div class="c c1" style="left:30px;width:83px"><span class="t">Untru...</span></div>
<div class="c " style="left:113px;width:124px"><svg class="zi" viewBox="0 0 14 16"><path d="M0.5 1.2 C4 0.2 10 0.2 13.5 1.2 L13.5 8.5 C13.5 12 10.5 14.5 7 15.8 C3.5 14.5 0.5 12 0.5 8.5 Z" fill="#86ca1c" stroke="#a5d95a" stroke-width="1"/><path d="M1.5 1.6 C4.5 0.9 9.5 0.9 12.5 1.6 L12.5 3 C9.5 2.3 4.5 2.3 1.5 3 Z" fill="#a4dc5a"/></svg><span class="t lk z">Untrust</span></div>
<div class="c " style="left:237px;width:124px"><svg class="zi" viewBox="0 0 14 16"><path d="M0.5 1.2 C4 0.2 10 0.2 13.5 1.2 L13.5 8.5 C13.5 12 10.5 14.5 7 15.8 C3.5 14.5 0.5 12 0.5 8.5 Z" fill="#86ca1c" stroke="#a5d95a" stroke-width="1"/><path d="M1.5 1.6 C4.5 0.9 9.5 0.9 12.5 1.6 L12.5 3 C9.5 2.3 4.5 2.3 1.5 3 Z" fill="#a4dc5a"/></svg><span class="t lk z">Local</span></div>
<div class="c " style="left:361px;width:83px"><span class="t">IPv4</span></div>
<div class="c " style="left:444px;width:52px"><span class="t">3</span></div>
<div class="c " style="left:496px;width:82px"></div>
<div class="c " style="left:578px;width:123px"><span class="t">Any</span></div>
<div class="c " style="left:701px;width:123px"><span class="t">Any</span></div>
<div class="c " style="left:824px;width:82px"><span class="ml"><span class="l">ping</span><span class="l">ssh</span><span class="l lk">65522</span></span></div>
<div class="c " style="left:906px;width:82px"><span class="t">Any</span></div>
<div class="c " style="left:988px;width:82px"><span class="t permit">允许</span></div>
<div class="c " style="left:1070px;width:82px"><span class="ml"><span class="l l1">IPS : ips</span><span class="l l2">AV : av</span></span><span class="dd">..</span></div>
<div class="c " style="left:1152px;width:81px"><span class="t lk hx">249646</span></div>
<div class="c " style="left:1233px;width:81px"><span class="t lk">23.38MB</span></div>
<div class="c cc" style="left:1314px;width:81px"><svg class="ck" viewBox="0 0 18 18"><rect x="0" y="0" width="18" height="18" rx="0.8" fill="#2b7de0"/><path d="M4 9.2 L7.6 12.8 L14.2 5" fill="none" stroke="#fff" stroke-width="2.4"/></svg></div>
<div class="c cc" style="left:1395px;width:81px"><svg class="ck" viewBox="0 0 18 18"><rect x="0" y="0" width="18" height="18" rx="0.8" fill="#2b7de0"/><path d="M4 9.2 L7.6 12.8 L14.2 5" fill="none" stroke="#fff" stroke-width="2.4"/></svg></div>
<div class="c ce" style="left:1476px;width:82px"><svg class="ed" viewBox="0 0 26 26"><circle cx="13" cy="13" r="11.6" fill="#f4f5fa" stroke="#e2e4ef" stroke-width="1.3"/><g transform="rotate(45 13 13)"><rect x="10.7" y="5.5" width="4.6" height="10.5" fill="#b0b4ce"/><path d="M10.7 16.8 L15.3 16.8 L13 20.8 Z" fill="#b0b4ce"/><rect x="10.7" y="7.6" width="4.6" height="1" fill="#f1f2f8"/></g></svg></div>
</div>
<div class="row rh" style="top:269px;height:52px">
<div class="c c0" style="left:0px;width:30px"><span class="cb"></span></div>
<div class="c c1" style="left:30px;width:83px"><span class="t">Trust...</span></div>
<div class="c " style="left:113px;width:124px"><svg class="zi" viewBox="0 0 14 16"><path d="M0.5 1.2 C4 0.2 10 0.2 13.5 1.2 L13.5 8.5 C13.5 12 10.5 14.5 7 15.8 C3.5 14.5 0.5 12 0.5 8.5 Z" fill="#86ca1c" stroke="#a5d95a" stroke-width="1"/><path d="M1.5 1.6 C4.5 0.9 9.5 0.9 12.5 1.6 L12.5 3 C9.5 2.3 4.5 2.3 1.5 3 Z" fill="#a4dc5a"/></svg><span class="t lk z">Trust</span></div>
<div class="c " style="left:237px;width:124px"><svg class="zi" viewBox="0 0 14 16"><path d="M0.5 1.2 C4 0.2 10 0.2 13.5 1.2 L13.5 8.5 C13.5 12 10.5 14.5 7 15.8 C3.5 14.5 0.5 12 0.5 8.5 Z" fill="#86ca1c" stroke="#a5d95a" stroke-width="1"/><path d="M1.5 1.6 C4.5 0.9 9.5 0.9 12.5 1.6 L12.5 3 C9.5 2.3 4.5 2.3 1.5 3 Z" fill="#a4dc5a"/></svg><span class="t lk z">Untrust</span></div>
<div class="c " style="left:361px;width:83px"><span class="t">IPv4</span></div>
<div class="c " style="left:444px;width:52px"><span class="t">4</span></div>
<div class="c " style="left:496px;width:82px"></div>
<div class="c " style="left:578px;width:123px"><span class="t">Any</span></div>
<div class="c " style="left:701px;width:123px"><span class="t">Any</span></div>
<div class="c " style="left:824px;width:82px"><span class="t">Any</span></div>
<div class="c " style="left:906px;width:82px"><span class="t">Any</span></div>
<div class="c " style="left:988px;width:82px"><span class="t permit">允许</span></div>
<div class="c " style="left:1070px;width:82px"><span class="ml"><span class="l l1">IPS : ips</span><span class="l l2">AV : av</span></span><span class="dd">..</span></div>
<div class="c " style="left:1152px;width:81px"><span class="t lk hx">1.44*10<sup>7</sup></span></div>
<div class="c " style="left:1233px;width:81px"><span class="t lk">1.43GB</span></div>
<div class="c cc" style="left:1314px;width:81px"><svg class="ck" viewBox="0 0 18 18"><rect x="0" y="0" width="18" height="18" rx="0.8" fill="#2b7de0"/><path d="M4 9.2 L7.6 12.8 L14.2 5" fill="none" stroke="#fff" stroke-width="2.4"/></svg></div>
<div class="c cc" style="left:1395px;width:81px"><svg class="ck" viewBox="0 0 18 18"><rect x="0" y="0" width="18" height="18" rx="0.8" fill="#2b7de0"/><path d="M4 9.2 L7.6 12.8 L14.2 5" fill="none" stroke="#fff" stroke-width="2.4"/></svg></div>
<div class="c ce" style="left:1476px;width:82px"><svg class="ed" viewBox="0 0 26 26"><circle cx="13" cy="13" r="11.6" fill="#f4f5fa" stroke="#e2e4ef" stroke-width="1.3"/><g transform="rotate(45 13 13)"><rect x="10.7" y="5.5" width="4.6" height="10.5" fill="#b0b4ce"/><path d="M10.7 16.8 L15.3 16.8 L13 20.8 Z" fill="#b0b4ce"/><rect x="10.7" y="7.6" width="4.6" height="1" fill="#f1f2f8"/></g></svg></div>
</div>
<div class="row rw" style="top:320px;height:51px">
<div class="c c0" style="left:0px;width:30px"><span class="cb"></span></div>
<div class="c c1" style="left:30px;width:83px"><span class="t">Untru...</span></div>
<div class="c " style="left:113px;width:124px"><svg class="zi" viewBox="0 0 14 16"><path d="M0.5 1.2 C4 0.2 10 0.2 13.5 1.2 L13.5 8.5 C13.5 12 10.5 14.5 7 15.8 C3.5 14.5 0.5 12 0.5 8.5 Z" fill="#86ca1c" stroke="#a5d95a" stroke-width="1"/><path d="M1.5 1.6 C4.5 0.9 9.5 0.9 12.5 1.6 L12.5 3 C9.5 2.3 4.5 2.3 1.5 3 Z" fill="#a4dc5a"/></svg><span class="t lk z">Untrust</span></div>
<div class="c " style="left:237px;width:124px"><svg class="zi" viewBox="0 0 14 16"><path d="M0.5 1.2 C4 0.2 10 0.2 13.5 1.2 L13.5 8.5 C13.5 12 10.5 14.5 7 15.8 C3.5 14.5 0.5 12 0.5 8.5 Z" fill="#86ca1c" stroke="#a5d95a" stroke-width="1"/><path d="M1.5 1.6 C4.5 0.9 9.5 0.9 12.5 1.6 L12.5 3 C9.5 2.3 4.5 2.3 1.5 3 Z" fill="#a4dc5a"/></svg><span class="t lk z">Trust</span></div>
<div class="c " style="left:361px;width:83px"><span class="t">IPv4</span></div>
<div class="c " style="left:444px;width:52px"><span class="t">6</span></div>
<div class="c " style="left:496px;width:82px"></div>
<div class="c " style="left:578px;width:123px"><span class="t">Any</span></div>
<div class="c " style="left:701px;width:123px"><span class="t lk">192.168.120.10</span></div>
<div class="c " style="left:824px;width:82px"><span class="t lk">120.100-</span></div>
<div class="c " style="left:906px;width:82px"><span class="t">Any</span></div>
<div class="c " style="left:988px;width:82px"><span class="t permit">允许</span></div>
<div class="c " style="left:1070px;width:82px"><span class="ml"><span class="l l1">IPS : ips</span><span class="l l2">AV : av</span></span><span class="dd">..</span></div>
<div class="c " style="left:1152px;width:81px"><span class="t lk hx">1.81*10<sup>6</sup></span></div>
<div class="c " style="left:1233px;width:81px"><span class="t lk">635.82M</span></div>
<div class="c cc" style="left:1314px;width:81px"><svg class="ck" viewBox="0 0 18 18"><rect x="0" y="0" width="18" height="18" rx="0.8" fill="#2b7de0"/><path d="M4 9.2 L7.6 12.8 L14.2 5" fill="none" stroke="#fff" stroke-width="2.4"/></svg></div>
<div class="c cc" style="left:1395px;width:81px"><svg class="ck" viewBox="0 0 18 18"><rect x="0" y="0" width="18" height="18" rx="0.8" fill="#2b7de0"/><path d="M4 9.2 L7.6 12.8 L14.2 5" fill="none" stroke="#fff" stroke-width="2.4"/></svg></div>
<div class="c ce" style="left:1476px;width:82px"><svg class="ed" viewBox="0 0 26 26"><circle cx="13" cy="13" r="11.6" fill="#f4f5fa" stroke="#e2e4ef" stroke-width="1.3"/><g transform="rotate(45 13 13)"><rect x="10.7" y="5.5" width="4.6" height="10.5" fill="#b0b4ce"/><path d="M10.7 16.8 L15.3 16.8 L13 20.8 Z" fill="#b0b4ce"/><rect x="10.7" y="7.6" width="4.6" height="1" fill="#f1f2f8"/></g></svg></div>
</div>
<div class="row rs" style="top:371px;height:52px">
<div class="c c0" style="left:0px;width:30px"><span class="cb"></span></div>
<div class="c c1" style="left:30px;width:83px"><span class="t">Untru...</span></div>
<div class="c " style="left:113px;width:124px"><svg class="zi" viewBox="0 0 14 16"><path d="M0.5 1.2 C4 0.2 10 0.2 13.5 1.2 L13.5 8.5 C13.5 12 10.5 14.5 7 15.8 C3.5 14.5 0.5 12 0.5 8.5 Z" fill="#86ca1c" stroke="#a5d95a" stroke-width="1"/><path d="M1.5 1.6 C4.5 0.9 9.5 0.9 12.5 1.6 L12.5 3 C9.5 2.3 4.5 2.3 1.5 3 Z" fill="#a4dc5a"/></svg><span class="t lk z">Untrust</span></div>
<div class="c " style="left:237px;width:124px"><svg class="zi" viewBox="0 0 14 16"><path d="M0.5 1.2 C4 0.2 10 0.2 13.5 1.2 L13.5 8.5 C13.5 12 10.5 14.5 7 15.8 C3.5 14.5 0.5 12 0.5 8.5 Z" fill="#86ca1c" stroke="#a5d95a" stroke-width="1"/><path d="M1.5 1.6 C4.5 0.9 9.5 0.9 12.5 1.6 L12.5 3 C9.5 2.3 4.5 2.3 1.5 3 Z" fill="#a4dc5a"/></svg><span class="t lk z">Trust</span></div>
<div class="c " style="left:361px;width:83px"><span class="t">IPv4</span></div>
<div class="c " style="left:444px;width:52px"><span class="t">5</span></div>
<div class="c " style="left:496px;width:82px"></div>
<div class="c " style="left:578px;width:123px"><span class="t lk">WX_Internet_P</span></div>
<div class="c " style="left:701px;width:123px"><span class="t lk">WX-1.252</span></div>
<div class="c " style="left:824px;width:82px"><span class="t lk">1.252-pc</span></div>
<div class="c " style="left:906px;width:82px"><span class="t">Any</span></div>
<div class="c " style="left:988px;width:82px"><span class="t permit">允许</span></div>
<div class="c " style="left:1070px;width:82px"><span class="ml"><span class="l l1">IPS : ips</span><span class="l l2">AV : av</span></span><span class="dd">..</span></div>
<div class="c " style="left:1152px;width:81px"><span class="t lk hx">0</span></div>
<div class="c " style="left:1233px;width:81px"><span class="t lk">0.00B</span></div>
<div class="c cc" style="left:1314px;width:81px"><svg class="ck" viewBox="0 0 18 18"><rect x="0" y="0" width="18" height="18" rx="0.8" fill="#2b7de0"/><path d="M4 9.2 L7.6 12.8 L14.2 5" fill="none" stroke="#fff" stroke-width="2.4"/></svg></div>
<div class="c cc" style="left:1395px;width:81px"><svg class="ck" viewBox="0 0 18 18"><rect x="0" y="0" width="18" height="18" rx="0.8" fill="#2b7de0"/><path d="M4 9.2 L7.6 12.8 L14.2 5" fill="none" stroke="#fff" stroke-width="2.4"/></svg></div>
<div class="c ce" style="left:1476px;width:82px"><svg class="ed" viewBox="0 0 26 26"><circle cx="13" cy="13" r="11.6" fill="#f4f5fa" stroke="#e2e4ef" stroke-width="1.3"/><g transform="rotate(45 13 13)"><rect x="10.7" y="5.5" width="4.6" height="10.5" fill="#b0b4ce"/><path d="M10.7 16.8 L15.3 16.8 L13 20.8 Z" fill="#b0b4ce"/><rect x="10.7" y="7.6" width="4.6" height="1" fill="#f1f2f8"/></g></svg></div>
</div>
<div class="row rw" style="top:422px;height:51px">
<div class="c c0" style="left:0px;width:30px"><span class="cb"></span></div>
<div class="c c1" style="left:30px;width:83px"><span class="t">Untru...</span></div>
<div class="c " style="left:113px;width:124px"><svg class="zi" viewBox="0 0 14 16"><path d="M0.5 1.2 C4 0.2 10 0.2 13.5 1.2 L13.5 8.5 C13.5 12 10.5 14.5 7 15.8 C3.5 14.5 0.5 12 0.5 8.5 Z" fill="#86ca1c" stroke="#a5d95a" stroke-width="1"/><path d="M1.5 1.6 C4.5 0.9 9.5 0.9 12.5 1.6 L12.5 3 C9.5 2.3 4.5 2.3 1.5 3 Z" fill="#a4dc5a"/></svg><span class="t lk z">untrust</span></div>
<div class="c " style="left:237px;width:124px"><svg class="zi" viewBox="0 0 14 16"><path d="M0.5 1.2 C4 0.2 10 0.2 13.5 1.2 L13.5 8.5 C13.5 12 10.5 14.5 7 15.8 C3.5 14.5 0.5 12 0.5 8.5 Z" fill="#86ca1c" stroke="#a5d95a" stroke-width="1"/><path d="M1.5 1.6 C4.5 0.9 9.5 0.9 12.5 1.6 L12.5 3 C9.5 2.3 4.5 2.3 1.5 3 Z" fill="#a4dc5a"/></svg><span class="t lk z">trust</span></div>
<div class="c " style="left:361px;width:83px"><span class="t">IPv4</span></div>
<div class="c " style="left:444px;width:52px"><span class="t">7</span></div>
<div class="c " style="left:496px;width:82px"></div>
<div class="c " style="left:578px;width:123px"><span class="t">Any</span></div>
<div class="c " style="left:701px;width:123px"><span class="t lk">192.168.1.254.</span></div>
<div class="c " style="left:824px;width:82px"><span class="t lk">1.254-Pc</span></div>
<div class="c " style="left:906px;width:82px"><span class="t">Any</span></div>
<div class="c " style="left:988px;width:82px"><span class="t permit">允许</span></div>
<div class="c " style="left:1070px;width:82px"><span class="ml"><span class="l l1">IPS : ips</span><span class="l l2">AV : av</span></span><span class="dd">..</span></div>
<div class="c " style="left:1152px;width:81px"><span class="t lk hx">14</span></div>
<div class="c " style="left:1233px;width:81px"><span class="t lk">560.00B.</span></div>
<div class="c cc" style="left:1314px;width:81px"><svg class="ck" viewBox="0 0 18 18"><rect x="0" y="0" width="18" height="18" rx="0.8" fill="#2b7de0"/><path d="M4 9.2 L7.6 12.8 L14.2 5" fill="none" stroke="#fff" stroke-width="2.4"/></svg></div>
<div class="c cc" style="left:1395px;width:81px"><svg class="ck" viewBox="0 0 18 18"><rect x="0" y="0" width="18" height="18" rx="0.8" fill="#2b7de0"/><path d="M4 9.2 L7.6 12.8 L14.2 5" fill="none" stroke="#fff" stroke-width="2.4"/></svg></div>
<div class="c ce" style="left:1476px;width:82px"><svg class="ed" viewBox="0 0 26 26"><circle cx="13" cy="13" r="11.6" fill="#f4f5fa" stroke="#e2e4ef" stroke-width="1.3"/><g transform="rotate(45 13 13)"><rect x="10.7" y="5.5" width="4.6" height="10.5" fill="#b0b4ce"/><path d="M10.7 16.8 L15.3 16.8 L13 20.8 Z" fill="#b0b4ce"/><rect x="10.7" y="7.6" width="4.6" height="1" fill="#f1f2f8"/></g></svg></div>
</div>
<div class="row rs" style="top:473px;height:52px">
<div class="c c0" style="left:0px;width:30px"><span class="cb"></span></div>
<div class="c c1" style="left:30px;width:83px"><span class="t">Untru...</span></div>
<div class="c " style="left:113px;width:124px"><svg class="zi" viewBox="0 0 14 16"><path d="M0.5 1.2 C4 0.2 10 0.2 13.5 1.2 L13.5 8.5 C13.5 12 10.5 14.5 7 15.8 C3.5 14.5 0.5 12 0.5 8.5 Z" fill="#86ca1c" stroke="#a5d95a" stroke-width="1"/><path d="M1.5 1.6 C4.5 0.9 9.5 0.9 12.5 1.6 L12.5 3 C9.5 2.3 4.5 2.3 1.5 3 Z" fill="#a4dc5a"/></svg><span class="t lk z">Untrust</span></div>
<div class="c " style="left:237px;width:124px"><svg class="zi" viewBox="0 0 14 16"><path d="M0.5 1.2 C4 0.2 10 0.2 13.5 1.2 L13.5 8.5 C13.5 12 10.5 14.5 7 15.8 C3.5 14.5 0.5 12 0.5 8.5 Z" fill="#86ca1c" stroke="#a5d95a" stroke-width="1"/><path d="M1.5 1.6 C4.5 0.9 9.5 0.9 12.5 1.6 L12.5 3 C9.5 2.3 4.5 2.3 1.5 3 Z" fill="#a4dc5a"/></svg><span class="t lk z">Trust</span></div>
<div class="c " style="left:361px;width:83px"><span class="t">IPv4</span></div>
<div class="c " style="left:444px;width:52px"><span class="t">8</span></div>
<div class="c " style="left:496px;width:82px"></div>
<div class="c " style="left:578px;width:123px"><span class="t">Any</span></div>
<div class="c " style="left:701px;width:123px"><span class="t lk">192.168.1.4</span></div>
<div class="c " style="left:824px;width:82px"><span class="t lk">1.4-Port.</span></div>
<div class="c " style="left:906px;width:82px"><span class="t">Any</span></div>
<div class="c " style="left:988px;width:82px"><span class="t permit">允许</span></div>
<div class="c " style="left:1070px;width:82px"><span class="ml"><span class="l l1">IPS : ips</span><span class="l l2">AV : av</span></span><span class="dd">..</span></div>
<div class="c " style="left:1152px;width:81px"><span class="t lk hx">6.89*10<sup>6</sup></span></div>
<div class="c " style="left:1233px;width:81px"><span class="t lk">3.46GB</span></div>
<div class="c cc" style="left:1314px;width:81px"><svg class="ck" viewBox="0 0 18 18"><rect x="0" y="0" width="18" height="18" rx="0.8" fill="#2b7de0"/><path d="M4 9.2 L7.6 12.8 L14.2 5" fill="none" stroke="#fff" stroke-width="2.4"/></svg></div>
<div class="c cc" style="left:1395px;width:81px"><svg class="ck" viewBox="0 0 18 18"><rect x="0" y="0" width="18" height="18" rx="0.8" fill="#2b7de0"/><path d="M4 9.2 L7.6 12.8 L14.2 5" fill="none" stroke="#fff" stroke-width="2.4"/></svg></div>
<div class="c ce" style="left:1476px;width:82px"><svg class="ed" viewBox="0 0 26 26"><circle cx="13" cy="13" r="11.6" fill="#f4f5fa" stroke="#e2e4ef" stroke-width="1.3"/><g transform="rotate(45 13 13)"><rect x="10.7" y="5.5" width="4.6" height="10.5" fill="#b0b4ce"/><path d="M10.7 16.8 L15.3 16.8 L13 20.8 Z" fill="#b0b4ce"/><rect x="10.7" y="7.6" width="4.6" height="1" fill="#f1f2f8"/></g></svg></div>
</div>
<div class="row rw" style="top:524px;height:51px">
<div class="c c0" style="left:0px;width:30px"><span class="cb"></span></div>
<div class="c c1" style="left:30px;width:83px"><span class="t">Untru...</span></div>
<div class="c " style="left:113px;width:124px"><svg class="zi" viewBox="0 0 14 16"><path d="M0.5 1.2 C4 0.2 10 0.2 13.5 1.2 L13.5 8.5 C13.5 12 10.5 14.5 7 15.8 C3.5 14.5 0.5 12 0.5 8.5 Z" fill="#86ca1c" stroke="#a5d95a" stroke-width="1"/><path d="M1.5 1.6 C4.5 0.9 9.5 0.9 12.5 1.6 L12.5 3 C9.5 2.3 4.5 2.3 1.5 3 Z" fill="#a4dc5a"/></svg><span class="t lk z">Untrust</span></div>
<div class="c " style="left:237px;width:124px"><svg class="zi" viewBox="0 0 14 16"><path d="M0.5 1.2 C4 0.2 10 0.2 13.5 1.2 L13.5 8.5 C13.5 12 10.5 14.5 7 15.8 C3.5 14.5 0.5 12 0.5 8.5 Z" fill="#86ca1c" stroke="#a5d95a" stroke-width="1"/><path d="M1.5 1.6 C4.5 0.9 9.5 0.9 12.5 1.6 L12.5 3 C9.5 2.3 4.5 2.3 1.5 3 Z" fill="#a4dc5a"/></svg><span class="t lk z">Trust</span></div>
<div class="c " style="left:361px;width:83px"><span class="t">IPv4</span></div>
<div class="c " style="left:444px;width:52px"><span class="t">9</span></div>
<div class="c " style="left:496px;width:82px"></div>
<div class="c " style="left:578px;width:123px"><span class="t">Any</span></div>
<div class="c " style="left:701px;width:123px"><span class="t lk">10.255.255.2</span></div>
<div class="c " style="left:824px;width:82px"><span class="t lk">8080</span></div>
<div class="c " style="left:906px;width:82px"><span class="t">Any</span></div>
<div class="c " style="left:988px;width:82px"><span class="t permit">允许</span></div>
<div class="c " style="left:1070px;width:82px"><span class="ml"><span class="l l1">IPS : ips</span><span class="l l2">AV : av</span></span><span class="dd">..</span></div>
<div class="c " style="left:1152px;width:81px"><span class="t lk hx">729</span></div>
<div class="c " style="left:1233px;width:81px"><span class="t lk">29.31KB.</span></div>
<div class="c cc" style="left:1314px;width:81px"><svg class="ck" viewBox="0 0 18 18"><rect x="0" y="0" width="18" height="18" rx="0.8" fill="#2b7de0"/><path d="M4 9.2 L7.6 12.8 L14.2 5" fill="none" stroke="#fff" stroke-width="2.4"/></svg></div>
<div class="c cc" style="left:1395px;width:81px"><svg class="ck" viewBox="0 0 18 18"><rect x="0" y="0" width="18" height="18" rx="0.8" fill="#2b7de0"/><path d="M4 9.2 L7.6 12.8 L14.2 5" fill="none" stroke="#fff" stroke-width="2.4"/></svg></div>
<div class="c ce" style="left:1476px;width:82px"><svg class="ed" viewBox="0 0 26 26"><circle cx="13" cy="13" r="11.6" fill="#f4f5fa" stroke="#e2e4ef" stroke-width="1.3"/><g transform="rotate(45 13 13)"><rect x="10.7" y="5.5" width="4.6" height="10.5" fill="#b0b4ce"/><path d="M10.7 16.8 L15.3 16.8 L13 20.8 Z" fill="#b0b4ce"/><rect x="10.7" y="7.6" width="4.6" height="1" fill="#f1f2f8"/></g></svg></div>
</div>
</div>
<div id="sb"><div class="arr" style="top:8px;border-bottom:6px solid #a3a3a3"></div><div class="th"></div><div class="arr" style="top:543px;border-top:6px solid #505050"></div></div>
<svg class="abs" style="left:1838px;top:338px" width="16" height="86" viewBox="1838 338 16 86"><path d="M1848.5 342.2 L1841.4 346.8 V414.8 L1848.5 419.4 L1856 414.8 V346.8 Z" fill="#e3ecfb" stroke="#3b82f6" stroke-width="1.5" stroke-linejoin="round"/></svg>
<div id="pg">
<svg class="abs" style="left:16px;top:9px" width="20" height="16" viewBox="0 0 20 16"><path d="M2 1 V15 M18 8 H6 M11 3 L6 8 L11 13" fill="none" stroke="#c4c4c4" stroke-width="1.6"/></svg>
<svg class="abs" style="left:46px;top:9px" width="18" height="16" viewBox="0 0 18 16"><path d="M16 8 H3 M8 3 L3 8 L8 13" fill="none" stroke="#c4c4c4" stroke-width="1.6"/></svg>
<div class="tbs" style="left:74px;top:10px;height:17px"></div>
<div class="pt" style="left:82px">第</div>
<div class="abs" style="left:108px;top:3px;width:62px;height:30px;border:1px solid #c9d3ea;background:#fff"></div>
<div class="pt" style="left:119.5px;font-size:17px">1</div>
<div class="pt" style="left:180px;word-spacing:2.2px">页, 共 1 页</div>
<div class="tbs" style="left:267px;top:10px;height:17px"></div>
<svg class="abs" style="left:275px;top:9px" width="18" height="16" viewBox="0 0 18 16"><path d="M2 8 H15 M10 3 L15 8 L10 13" fill="none" stroke="#c4c4c4" stroke-width="1.6"/></svg>
<svg class="abs" style="left:305px;top:9px" width="20" height="16" viewBox="0 0 20 16"><path d="M18 1 V15 M2 8 H14 M9 3 L14 8 L9 13" fill="none" stroke="#c4c4c4" stroke-width="1.6"/></svg>
<div class="tbs" style="left:332px;top:10px;height:17px"></div>
<div class="pt" style="left:337px">每页显示条数</div>
<div class="pt" style="left:438px;font-size:16px">25</div>
<svg class="abs" style="left:467.5px;top:19.5px" width="9" height="6" viewBox="0 0 9 6"><path d="M0.5 0.5 H8.5 L4.5 5 Z" fill="#222"/></svg>
<div class="pt" style="left:1422px;word-spacing:2px">显示 1 - 11条，共 11 条</div>
</div>
</body>
</html>
